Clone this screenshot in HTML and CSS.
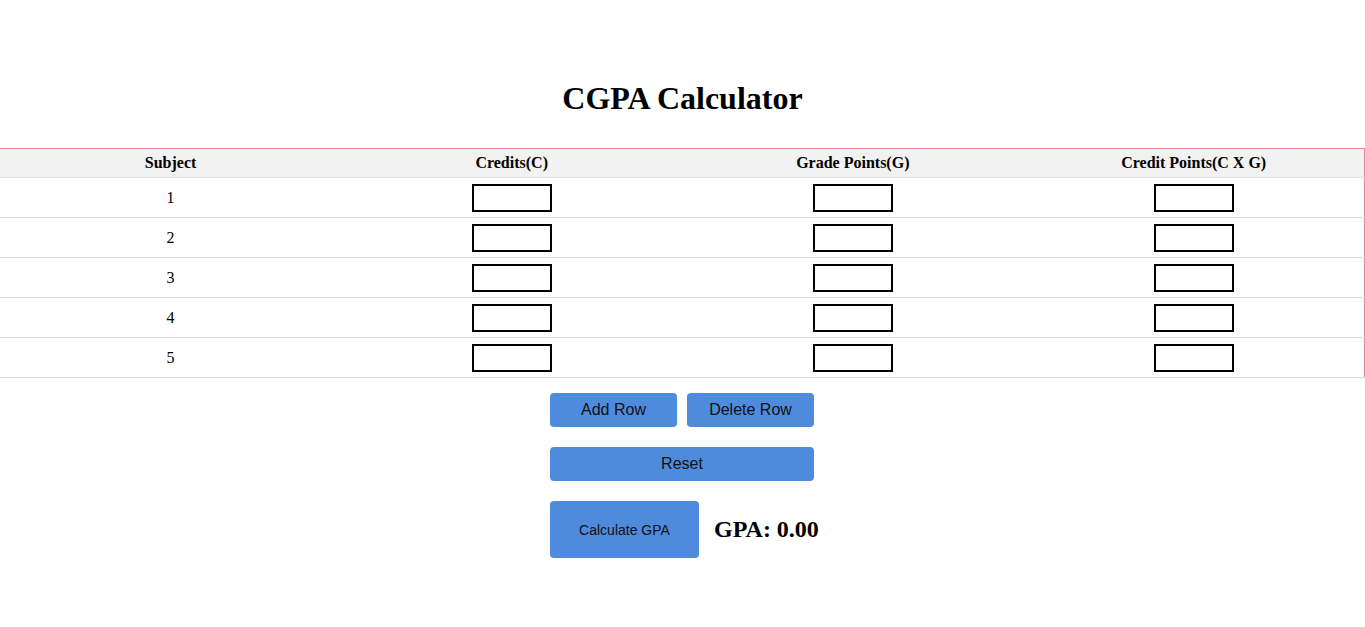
FILE: index.html
```html
<!DOCTYPE html>
<html>
<head>
<meta charset="utf-8">
<title>CGPA Calculator</title>
<link rel="stylesheet" href="styles.css">
</head>
<body>
<h1 class="title">CGPA Calculator</h1>
<table class="grid">
  <thead>
    <tr><th>Subject</th><th>Credits(C)</th><th>Grade Points(G)</th><th>Credit Points(C X G)</th></tr>
  </thead>
  <tbody>
    <tr><td>1</td><td><input class="cell-input" type="text"></td><td><input class="cell-input" type="text"></td><td><input class="cell-input" type="text"></td></tr>
    <tr><td>2</td><td><input class="cell-input" type="text"></td><td><input class="cell-input" type="text"></td><td><input class="cell-input" type="text"></td></tr>
    <tr><td>3</td><td><input class="cell-input" type="text"></td><td><input class="cell-input" type="text"></td><td><input class="cell-input" type="text"></td></tr>
    <tr><td>4</td><td><input class="cell-input" type="text"></td><td><input class="cell-input" type="text"></td><td><input class="cell-input" type="text"></td></tr>
    <tr><td>5</td><td><input class="cell-input" type="text"></td><td><input class="cell-input" type="text"></td><td><input class="cell-input" type="text"></td></tr>
  </tbody>
</table>
<div class="controls">
  <div class="row-pair">
    <button class="btn btn-half">Add Row</button>
    <button class="btn btn-half">Delete Row</button>
  </div>
  <button class="btn btn-full">Reset</button>
  <div class="result">
    <button class="btn btn-calc">Calculate GPA</button>
    <span class="gpa">GPA: 0.00</span>
  </div>
</div>
</body>
</html>
```
FILE: styles.css
```css
html, body {
  margin: 0;
  padding: 0;
  background: #ffffff;
  font-family: "Liberation Serif", "Times New Roman", serif;
  color: #000;
}
.title {
  font-size: 32px;
  font-weight: bold;
  text-align: center;
  margin: 80px 0 31px;
  line-height: 37px;
}
.grid {
  width: 1365px;
  border-collapse: collapse;
  table-layout: fixed;
  border-top: 1px solid #de8a8a;
  border-right: 1px solid #de8a8a;
}
.grid th {
  background: #f2f2f2;
  font-size: 16px;
  font-weight: bold;
  height: 28px;
  padding: 0;
  border-bottom: 1px solid #dddddd;
  text-align: center;
}
.grid td {
  font-size: 16px;
  text-align: center;
  height: 40px;
  padding: 0;
  border-bottom: 1px solid #dddddd;
  box-sizing: border-box;
}
.cell-input {
  display: block;
  margin: 0 auto;
  width: 80px;
  height: 28px;
  box-sizing: border-box;
  border: 2px solid #000;
  padding: 0;
  background: #fff;
}
.controls {
  width: 265px;
  margin: 15px auto 0;
  display: flex;
  flex-direction: column;
  align-items: flex-start;
  gap: 20px;
}
.row-pair {
  display: flex;
  gap: 10px;
}
.btn {
  background: #4f8bdc;
  border: none;
  border-radius: 4px;
  color: #111;
  font-family: "Liberation Sans", Arial, sans-serif;
  font-size: 16px;
  padding: 0;
  height: 34px;
  cursor: pointer;
  flex-shrink: 0;
}
.btn-half {
  width: 127px;
}
.btn-full {
  width: 264px;
}
.result {
  display: flex;
  align-items: center;
  gap: 15px;
}
.btn-calc {
  width: 149px;
  height: 57px;
  font-size: 14px;
}
.gpa {
  font-size: 24px;
  font-weight: bold;
  white-space: nowrap;
}
```
